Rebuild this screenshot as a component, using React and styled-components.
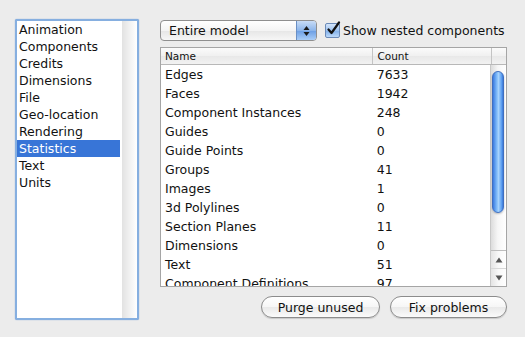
import React from "react";
import styled, { createGlobalStyle } from "styled-components";

const GlobalStyle = createGlobalStyle`
  body {
    margin: 0;
    background: #ececec;
    font-family: "DejaVu Sans", "Liberation Sans", sans-serif;
    color: #111;
  }
`;

const Window = styled.div`
  width: 525px;
  height: 337px;
  box-sizing: border-box;
  padding: 19px 18px 0 15px;
  display: flex;
  gap: 21px;
`;

const SideList = styled.div`
  width: 125px;
  height: 301px;
  box-sizing: border-box;
  border: 2px solid #86afe0;
  box-shadow: 0 0 1px #5d8fd0;
  border-radius: 2px;
  background: #fff;
  display: flex;
`;

const SideItems = styled.div`
  flex: 1;
  display: flex;
  flex-direction: column;
`;

const SideItem = styled.div`
  height: 17px;
  line-height: 17px;
  padding-left: 2px;
  font-size: 12.5px;
  background: ${({ $active }) => ($active ? "#3875d7" : "transparent")};
  color: ${({ $active }) => ($active ? "#fff" : "#111")};
  margin-right: 2px;
`;

const SideTrack = styled.div`
  width: 15px;
  background: linear-gradient(to right, #e2e2e2, #f4f4f4 60%, #fff);
`;

const Main = styled.div`
  flex: 1;
  display: flex;
  flex-direction: column;
  padding-top: 1px;
`;

const TopRow = styled.div`
  display: flex;
  align-items: center;
  gap: 8px;
  height: 21px;
`;

const Select = styled.div`
  width: 157px;
  height: 21px;
  box-sizing: border-box;
  border: 1px solid #8f8f8f;
  border-radius: 4px;
  background: linear-gradient(#ffffff, #f4f4f4 50%, #e6e6e6 51%, #f6f6f6);
  display: flex;
  align-items: center;
  overflow: hidden;
  font-size: 12.5px;
`;

const SelectLabel = styled.span`
  flex: 1;
  padding-left: 8px;
`;

const SelectArrows = styled.div`
  width: 19px;
  height: 100%;
  border-left: 1px solid #6a8fc4;
  background: linear-gradient(#c8dcf6, #8cb5ea 50%, #6b9ee4 51%, #a9cdf7);
  display: flex;
  align-items: center;
  justify-content: center;
`;

const CheckLabel = styled.label`
  display: flex;
  align-items: center;
  gap: 3px;
  font-size: 12.5px;
  white-space: nowrap;
`;

const CheckBox = styled.span`
  width: 13px;
  height: 13px;
  border: 1px solid #6b8ab8;
  border-radius: 2px;
  background: linear-gradient(#d4e5fa, #9ec3f0 50%, #7eaeea 51%, #bcd9fa);
  position: relative;
`;

const Table = styled.div`
  margin-top: 6px;
  width: 347px;
  height: 240px;
  box-sizing: border-box;
  border: 1px solid #a5a5a5;
  background: #fff;
  display: flex;
  flex-direction: column;
  overflow: hidden;
`;

const HeaderRow = styled.div`
  display: flex;
  height: 16px;
  flex-shrink: 0;
  border-bottom: 1px solid #b8b8b8;
  background: linear-gradient(#fbfbfb, #f0f0f0 50%, #e8e8e8 51%, #f2f2f2);
  font-size: 10.5px;
`;

const HeaderCell = styled.div`
  width: ${({ $w }) => $w}px;
  box-sizing: border-box;
  padding-left: ${({ $pad }) => $pad}px;
  line-height: 16px;
  border-right: ${({ $last }) => ($last ? "none" : "1px solid #c4c4c4")};
`;

const Body = styled.div`
  flex: 1;
  display: flex;
  overflow: hidden;
`;

const Rows = styled.div`
  flex: 1;
  display: flex;
  flex-direction: column;
  overflow: hidden;
`;

const Row = styled.div`
  display: flex;
  height: 19px;
  line-height: 20px;
  flex-shrink: 0;
  font-size: 12.5px;
`;

const Cell = styled.div`
  width: ${({ $w }) => $w}px;
  padding-left: ${({ $pad }) => $pad}px;
  box-sizing: border-box;
  white-space: nowrap;
`;

const ScrollBar = styled.div`
  width: 15px;
  border-left: 1px solid #c8c8c8;
  background: linear-gradient(to right, #dcdcdc, #f6f6f6 45%, #fff);
  display: flex;
  flex-direction: column;
`;

const TrackArea = styled.div`
  flex: 1;
  padding: 6px 0 0 1px;
`;

const Thumb = styled.div`
  width: 12px;
  height: 142px;
  border-radius: 6px;
  box-sizing: border-box;
  border: 1px solid #3f6fc0;
  background: linear-gradient(to right, #3a7ae0, #79b6f8 35%, #a6d3fd 55%, #5e9ff0 85%, #3b78d8);
  box-shadow: 0 1px 2px rgba(0, 0, 0, 0.25);
`;

const ArrowButton = styled.div`
  height: 17px;
  border-top: 1px solid ${({ $soft }) => ($soft ? "#d8d8d8" : "#bdbdbd")};
  display: flex;
  align-items: center;
  justify-content: center;
  background: linear-gradient(to right, #e4e4e4, #f8f8f8 50%, #ffffff);
`;

const Buttons = styled.div`
  display: flex;
  justify-content: flex-end;
  gap: 10px;
  margin-top: 9px;
`;

const PushButton = styled.button`
  width: ${({ $w }) => $w}px;
  height: 22px;
  border: 1px solid #8c8c8c;
  border-radius: 11px;
  background: linear-gradient(#ffffff, #f6f6f6 50%, #e9e9e9 51%, #fbfbfb);
  box-shadow: 0 1px 1px rgba(0, 0, 0, 0.15);
  font-family: "DejaVu Sans", "Liberation Sans", sans-serif;
  font-size: 12.5px;
  color: #111;
  padding: 0;
`;

const categories = [
  "Animation",
  "Components",
  "Credits",
  "Dimensions",
  "File",
  "Geo-location",
  "Rendering",
  "Statistics",
  "Text",
  "Units",
];

const stats = [
  ["Edges", "7633"],
  ["Faces", "1942"],
  ["Component Instances", "248"],
  ["Guides", "0"],
  ["Guide Points", "0"],
  ["Groups", "41"],
  ["Images", "1"],
  ["3d Polylines", "0"],
  ["Section Planes", "11"],
  ["Dimensions", "0"],
  ["Text", "51"],
  ["Component Definitions", "97"],
];

const App = () => {
  return (
    <Window>
      <GlobalStyle />
      <SideList>
        <SideItems>
          {categories.map((c) => (
            <SideItem key={c} $active={c === "Statistics"}>
              {c}
            </SideItem>
          ))}
        </SideItems>
        <SideTrack />
      </SideList>

      <Main>
        <TopRow>
          <Select>
            <SelectLabel>Entire model</SelectLabel>
            <SelectArrows>
              <svg width="7" height="12" viewBox="0 0 7 12">
                <path d="M3.5 1 L6.5 5 L0.5 5 Z" fill="#1a1a1a" />
                <path d="M3.5 11 L6.5 7 L0.5 7 Z" fill="#1a1a1a" />
              </svg>
            </SelectArrows>
          </Select>
          <CheckLabel>
            <CheckBox>
              <svg
                width="15"
                height="15"
                viewBox="0 0 15 15"
                style={{ position: "absolute", left: 0, top: -3 }}
              >
                <path
                  d="M2.5 8.5 L5.5 12 L13 1.5"
                  stroke="#111"
                  strokeWidth="2.2"
                  fill="none"
                  strokeLinecap="round"
                  strokeLinejoin="round"
                />
              </svg>
            </CheckBox>
            Show nested components
          </CheckLabel>
        </TopRow>

        <Table>
          <HeaderRow>
            <HeaderCell $w={213} $pad={4}>Name</HeaderCell>
            <HeaderCell $w={119} $pad={4}>Count</HeaderCell>
            <HeaderCell $w={14} $last />
          </HeaderRow>
          <Body>
            <Rows>
              {stats.map(([name, count]) => (
                <Row key={name}>
                  <Cell $w={213} $pad={4}>{name}</Cell>
                  <Cell $w={118} $pad={4}>{count}</Cell>
                </Row>
              ))}
            </Rows>
            <ScrollBar>
              <TrackArea>
                <Thumb />
              </TrackArea>
              <ArrowButton>
                <svg width="8" height="6" viewBox="0 0 8 6">
                  <path d="M4 0.5 L7.5 5.5 L0.5 5.5 Z" fill="#555" />
                </svg>
              </ArrowButton>
              <ArrowButton $soft>
                <svg width="8" height="6" viewBox="0 0 8 6">
                  <path d="M4 5.5 L7.5 0.5 L0.5 0.5 Z" fill="#555" />
                </svg>
              </ArrowButton>
            </ScrollBar>
          </Body>
        </Table>

        <Buttons>
          <PushButton $w={119}>Purge unused</PushButton>
          <PushButton $w={117}>Fix problems</PushButton>
        </Buttons>
      </Main>
    </Window>
  );
};

export default App;
